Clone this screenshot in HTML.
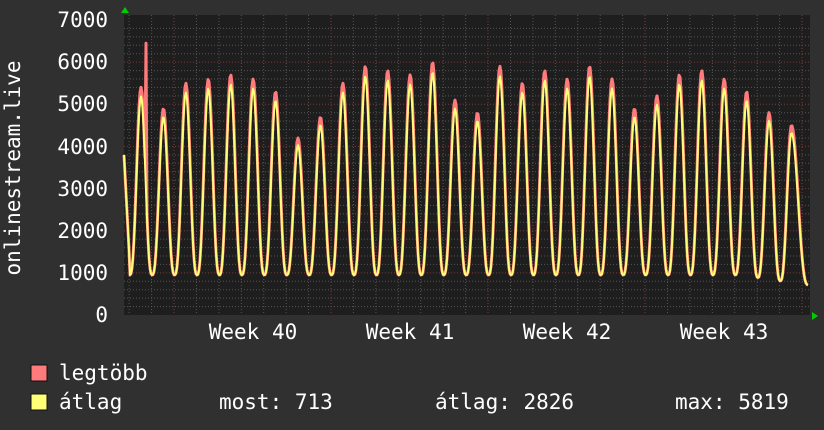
<!DOCTYPE html>
<html><head><meta charset="utf-8"><style>
html,body{margin:0;padding:0;background:#303030;}
body{width:824px;height:430px;overflow:hidden;position:relative;font-family:"DejaVu Sans Mono","Liberation Mono",monospace;color:#fff;}
svg{position:absolute;left:0;top:0;}
</style></head><body>
<svg id="g" width="824" height="430" xmlns="http://www.w3.org/2000/svg" font-family="DejaVu Sans Mono, Liberation Mono, monospace" font-size="21" fill="#fff">
<rect x="0" y="0" width="824" height="430" fill="#303030"/>
<rect x="124" y="15" width="686" height="300" fill="#1e1e1e"/>
<g id="grid"></g>
<path id="red" fill="none" stroke="#ff7b7b" stroke-width="3" stroke-linejoin="round"/>
<path id="yel" fill="none" stroke="#ffff77" stroke-width="2" stroke-linejoin="round"/>
<polygon points="121,13 125,7 129,13" fill="#00cc00"/>
<polygon points="812,312 818,316 812,320" fill="#00cc00"/>
<g text-anchor="end">
<text x="108" y="27">7000</text><text x="108" y="69">6000</text><text x="108" y="111">5000</text><text x="108" y="154">4000</text><text x="108" y="196">3000</text><text x="108" y="238">2000</text><text x="108" y="280">1000</text><text x="108" y="322">0</text>
</g>
<g text-anchor="middle">
<text x="253" y="339">Week 40</text><text x="410" y="339">Week 41</text><text x="567" y="339">Week 42</text><text x="724" y="339">Week 43</text>
</g>
<text transform="translate(20,168) rotate(-90)" text-anchor="middle">onlinestream.live</text>
<rect x="31" y="365" width="16" height="16" fill="#ff7b7b" stroke="#111" stroke-width="1"/>
<rect x="31" y="394" width="16" height="16" fill="#ffff77" stroke="#111" stroke-width="1"/>
<text x="59" y="380">legtöbb</text>
<text x="59" y="409">átlag</text>
<text x="219" y="409">most: 713</text>
<text x="435" y="409">átlag: 2826</text>
<text x="675" y="409">max: 5819</text>
</svg>
<script>
var g=document.getElementById("grid"),h="";
var y0=315,k=295/7000;
for(var v=200;v<7000;v+=200){var y=(y0-v*k).toFixed(1);var maj=v%1000==0;
h+='<line x1="124" x2="810" y1="'+y+'" y2="'+y+'" stroke="'+(maj?'#7a3a3a':'#555')+'" stroke-dasharray="1,2"/>';}
for(var x=174-22.43*2;x<810;x+=22.43){if(x<125)continue;var wk=Math.abs(((x-174)/157.0)-Math.round((x-174)/157.0))<0.02;
h+='<line y1="15" y2="315" x1="'+x.toFixed(1)+'" x2="'+x.toFixed(1)+'" stroke="'+(wk?'#7a3a3a':'#555')+'" stroke-dasharray="1,2"/>';}
g.innerHTML=h;
var pk=[5400,4900,5500,5600,5700,5600,5300,4200,4700,5500,5900,5800,5700,6000,5100,4800,5900,5500,5800,5600,5900,5600,4900,5200,5700,5800,5600,5300,4800,4500];
function val(x,f){var t=(x-141)/22.43;var i=Math.round(t);var ph=(t-i)*2*Math.PI;
if(t>29){i=29;ph=Math.min((t-29)/0.74*Math.PI,Math.PI);}
var p=pk[Math.max(0,i)]*f;var tr=950-Math.max(0,x-740)*3.5;
var c=(1+Math.cos(ph))/2;return tr+(p-tr)*Math.pow(c,1.4);}
function path(f){var d="";for(var x=124;x<=808;x+=1){var v=val(x,f);if(x<130)v=Math.max(v,3800-(x-124)*450);if(f>0.98&&x==146)v=6450;
d+=(x==124?"M":"L")+x+","+(y0-v*k).toFixed(1);}return d;}
document.getElementById("red").setAttribute("d",path(1));
document.getElementById("yel").setAttribute("d",path(0.96));
</script>
</body></html>
